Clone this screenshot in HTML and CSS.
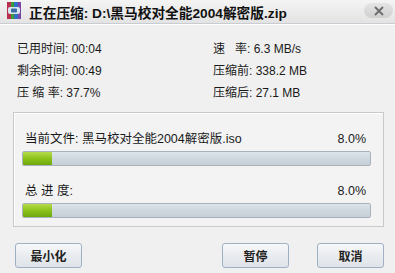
FILE: index.html
```html
<!DOCTYPE html>
<html>
<head>
<meta charset="utf-8">
<link rel="stylesheet" href="styles.css">
</head>
<body>
<div class="win">
  <div class="titlebar">
    <svg class="appicon" width="14" height="17" viewBox="0 0 14 17">
      <rect x="0" y="0" width="4" height="17" fill="#b8304e"/>
      <rect x="4" y="0" width="3" height="17" fill="#3e9a3a"/>
      <rect x="7" y="0" width="4" height="17" fill="#2f6fc4"/>
      <rect x="11" y="0" width="3" height="17" fill="#7a46a8"/>
      <rect x="1" y="5" width="12" height="7" rx="2" fill="#d8e6f2"/>
      <rect x="4" y="6.5" width="6" height="4" rx="1" fill="#3a6ea8"/>
    </svg>
    <span class="title">正在压缩: D:\黑马校对全能2004解密版.zip</span>
    <div class="close">
      <svg width="10" height="10" viewBox="0 0 10 10"><path d="M1 1L9 9M9 1L1 9" stroke="#6b6b6b" stroke-width="1.8"/></svg>
    </div>
  </div>
  <div class="content">
    <div class="info">
      <div class="col">
        <div class="row">已用时间: 00:04</div>
        <div class="row">剩余时间: 00:49</div>
        <div class="row">压 缩 率: 37.7%</div>
      </div>
      <div class="col">
        <div class="row">速&nbsp;&nbsp;&nbsp;率: 6.3 MB/s</div>
        <div class="row">压缩前: 338.2 MB</div>
        <div class="row">压缩后: 27.1 MB</div>
      </div>
    </div>
    <div class="panel">
      <div class="label"><span>当前文件: 黑马校对全能2004解密版.iso</span><span>8.0%</span></div>
      <div class="bar"><div class="fill" style="width:29px"></div></div>
      <div class="label l2"><span>总 进 度:</span><span>8.0%</span></div>
      <div class="bar"><div class="fill" style="width:29px"></div></div>
    </div>
    <div class="buttons">
      <div class="btn">最小化</div>
      <div class="right">
        <div class="btn">暂停</div>
        <div class="btn">取消</div>
      </div>
    </div>
  </div>
</div>
</body>
</html>
```
FILE: styles.css
```css
* { box-sizing: border-box; }
html, body { margin: 0; padding: 0; }
body {
  width: 395px; height: 273px; overflow: hidden;
  background: #f0f0f0;
  font-family: "Liberation Sans", "Noto Sans CJK SC", sans-serif;
  font-size: 12px; color: #1a1a1a;
}
.win { width: 395px; height: 273px; display: flex; flex-direction: column; }
.titlebar {
  height: 24px; display: flex; align-items: center;
  padding: 0 2px 0 7px;
  background: linear-gradient(#f4f4f4, #e3e3e3);
  border-bottom: 1px solid #c9ccd0;
  box-shadow: 0 1px 0 #ffffff;
}
.appicon { flex: none; margin-top: -2px; }
.title {
  margin-left: 8px; font-weight: bold; font-size: 13.7px; color: #111;
  flex: 1; white-space: nowrap;
}
.close {
  width: 29px; height: 15px; border-radius: 8px;
  background: linear-gradient(#e4e4e4, #d0d0d0);
  display: flex; align-items: center; justify-content: center;
  margin-top: -2px;
}
.content { flex: 1; padding: 17px 11px 0 13px; display: flex; flex-direction: column; }
.info { display: flex; padding-left: 4px; }
.col { display: flex; flex-direction: column; gap: 5px; }
.col:first-child { width: 196px; }
.row { height: 17px; line-height: 17px; white-space: nowrap; }
.panel {
  margin-top: 10px; width: 371px; height: 115px;
  border: 1px solid #c9c9c9; background: #f3f3f3;
  padding: 18px 12px 0 8px;
  box-shadow: inset 1px 1px 0 #fff;
}
.label {
  display: flex; justify-content: space-between; height: 17px; line-height: 17px;
  padding: 0 0 0 3px; margin-right: 5px; font-size: 12.5px;
}
.l2 { margin-top: 17px; }
.bar {
  margin-top: 3px; height: 15px; width: 349px;
  border: 1px solid #a9b2ba; border-radius: 2px;
  background: linear-gradient(#dde4ea, #cfd8df 50%, #c5cfd7);
  overflow: hidden;
}
.fill { height: 100%; background: linear-gradient(#b5dc4a, #8bc21a 50%, #6ea80e); }
.buttons { margin-top: 16px; display: flex; justify-content: space-between; padding-left: 2px; }
.right { display: flex; gap: 28px; }
.btn {
  width: 67px; height: 25px; border: 1px solid #9fb0c2; border-radius: 3px;
  background: linear-gradient(#f7f8fa, #e9ecef 50%, #dfe4e9);
  display: flex; align-items: center; justify-content: center;
  font-size: 12px; font-weight: bold; color: #222;
  font-family: "Noto Sans CJK SC", sans-serif;
}
```
